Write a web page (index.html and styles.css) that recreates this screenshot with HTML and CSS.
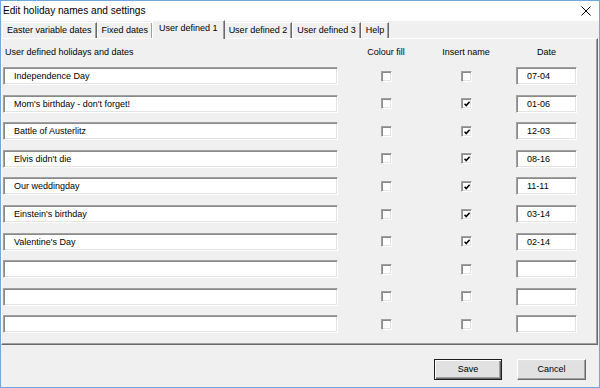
FILE: index.html
```html
<!DOCTYPE html>
<html>
<head>
<meta charset="utf-8">
<link rel="stylesheet" href="styles.css">
</head>
<body>
<div class="window">
  <div class="titlebar">
    <span class="title">Edit holiday names and settings</span>
    <svg class="close" width="10" height="10" viewBox="0 0 10 10"><path d="M0.5 0.5 L9.5 9.5 M9.5 0.5 L0.5 9.5" stroke="#000" stroke-width="1" fill="none"/></svg>
  </div>
  <div class="tabs">
    <div class="tab">Easter variable dates</div>
    <div class="tab">Fixed dates</div>
    <div class="tab active">User defined 1</div>
    <div class="tab">User defined 2</div>
    <div class="tab">User defined 3</div>
    <div class="tab">Help</div>
  </div>
  <div class="page">
    <div class="grid">
      <div class="hdr hdr-name">User defined holidays and dates</div>
      <div class="hdr">Colour fill</div>
      <div class="hdr">Insert name</div>
      <div class="hdr hdr-date">Date</div>

      <div class="field name">Independence Day</div>
      <div class="cell"><span class="cb"></span></div>
      <div class="cell"><span class="cb"></span></div>
      <div class="field date">07-04</div>

      <div class="field name">Mom's birthday - don't forget!</div>
      <div class="cell"><span class="cb"></span></div>
      <div class="cell"><span class="cb checked"><svg viewBox="0 0 6 6" width="6" height="6"><path d="M0.5 2.8 L2.2 4.6 L5.6 0.8" stroke="#000" stroke-width="1.5" fill="none"/></svg></span></div>
      <div class="field date">01-06</div>

      <div class="field name">Battle of Austerlitz</div>
      <div class="cell"><span class="cb"></span></div>
      <div class="cell"><span class="cb checked"><svg viewBox="0 0 6 6" width="6" height="6"><path d="M0.5 2.8 L2.2 4.6 L5.6 0.8" stroke="#000" stroke-width="1.5" fill="none"/></svg></span></div>
      <div class="field date">12-03</div>

      <div class="field name">Elvis didn't die</div>
      <div class="cell"><span class="cb"></span></div>
      <div class="cell"><span class="cb checked"><svg viewBox="0 0 6 6" width="6" height="6"><path d="M0.5 2.8 L2.2 4.6 L5.6 0.8" stroke="#000" stroke-width="1.5" fill="none"/></svg></span></div>
      <div class="field date">08-16</div>

      <div class="field name">Our weddingday</div>
      <div class="cell"><span class="cb"></span></div>
      <div class="cell"><span class="cb checked"><svg viewBox="0 0 6 6" width="6" height="6"><path d="M0.5 2.8 L2.2 4.6 L5.6 0.8" stroke="#000" stroke-width="1.5" fill="none"/></svg></span></div>
      <div class="field date">11-11</div>

      <div class="field name">Einstein's birthday</div>
      <div class="cell"><span class="cb"></span></div>
      <div class="cell"><span class="cb checked"><svg viewBox="0 0 6 6" width="6" height="6"><path d="M0.5 2.8 L2.2 4.6 L5.6 0.8" stroke="#000" stroke-width="1.5" fill="none"/></svg></span></div>
      <div class="field date">03-14</div>

      <div class="field name">Valentine's Day</div>
      <div class="cell"><span class="cb"></span></div>
      <div class="cell"><span class="cb checked"><svg viewBox="0 0 6 6" width="6" height="6"><path d="M0.5 2.8 L2.2 4.6 L5.6 0.8" stroke="#000" stroke-width="1.5" fill="none"/></svg></span></div>
      <div class="field date">02-14</div>

      <div class="field name"></div>
      <div class="cell"><span class="cb"></span></div>
      <div class="cell"><span class="cb"></span></div>
      <div class="field date"></div>

      <div class="field name"></div>
      <div class="cell"><span class="cb"></span></div>
      <div class="cell"><span class="cb"></span></div>
      <div class="field date"></div>

      <div class="field name"></div>
      <div class="cell"><span class="cb"></span></div>
      <div class="cell"><span class="cb"></span></div>
      <div class="field date"></div>
    </div>
  </div>
  <div class="footer">
    <div class="btn default">Save</div>
    <div class="btn">Cancel</div>
  </div>
</div>
</body>
</html>
```
FILE: styles.css
```css
* { box-sizing: border-box; }
html, body { margin: 0; padding: 0; }
body {
  width: 600px;
  height: 388px;
  font-family: "Liberation Sans", Arial, sans-serif;
  font-size: 9px;
  color: #000;
  background: #f0f0f0;
}
.window {
  width: 600px;
  height: 388px;
  border: 1px solid #6fa7de;
  background: #f0f0f0;
  display: flex;
  flex-direction: column;
}
.titlebar {
  height: 20px;
  background: #fff;
  display: flex;
  align-items: center;
  justify-content: space-between;
  padding: 0 8px 1px 2px;
  flex: none;
}
.title {
  font-size: 10.1px;
  color: #000;
}
.close { display: block; }
.tabs {
  height: 17px;
  display: flex;
  align-items: flex-end;
  padding-left: 1px;
  flex: none;
  position: relative;
  z-index: 2;
}
.tab {
  height: 16px;
  padding: 0 4px;
  line-height: 15px;
  border-top: 1px solid #fff;
  border-left: 1px solid #fff;
  border-right: 1px solid #696969;
  box-shadow: inset -1px 0 #a0a0a0;
  white-space: nowrap;
  background: #f0f0f0;
}
.tab.active {
  height: 19px;
  margin: 0 -1px -1px -1px;
  padding: 0 6px;
  line-height: 15px;
  position: relative;
}
.page {
  flex: none;
  height: 307px;
  margin: 0 1px 0 0;
  border-top: 1px solid #fff;
  border-left: 1px solid #fff;
  border-right: 1px solid #696969;
  border-bottom: 1px solid #696969;
  box-shadow: inset -1px -1px #a0a0a0;
  padding: 6px 0 0 1px;
}
.grid {
  display: grid;
  grid-template-columns: 335px 96px 64px 79px;
  grid-template-rows: 12.5px;
  grid-auto-rows: 18px;
  row-gap: 9.6px;
}
.hdr {
  line-height: 14px;
  height: 14px;
  text-align: center;
  white-space: nowrap;
}
.hdr-name { text-align: left; padding-left: 2px; }
.hdr-date { padding-left: 18px; }
.field {
  height: 18px;
  background: #fff;
  border-top: 1px solid #a0a0a0;
  border-left: 1px solid #a0a0a0;
  border-right: 1px solid #fff;
  border-bottom: 1px solid #fff;
  box-shadow: inset 1px 1px #8a8a8a, inset -1px -1px #e3e3e3;
  line-height: 16px;
  white-space: nowrap;
  overflow: hidden;
}
.name { padding-left: 10px; }
.date { width: 61px; justify-self: end; padding-left: 10px; }
.cell {
  display: flex;
  align-items: center;
  justify-content: center;
}
.cb {
  width: 11px;
  height: 11px;
  background: #fff;
  border-top: 1px solid #a0a0a0;
  border-left: 1px solid #a0a0a0;
  border-right: 1px solid #fff;
  border-bottom: 1px solid #fff;
  box-shadow: inset 1px 1px #8a8a8a, inset -1px -1px #e3e3e3;
  display: flex;
  align-items: center;
  justify-content: center;
  padding: 1px 0 0 1px;
}
.cb svg { display: block; }
.footer {
  flex: 1;
  display: flex;
  justify-content: flex-end;
  align-items: flex-start;
  padding: 14px 13px 0 0;
  gap: 15px;
}
.btn {
  width: 69px;
  height: 21px;
  line-height: 19px;
  text-align: center;
  background: #e1e1e1;
  border-top: 1px solid #fff;
  border-left: 1px solid #fff;
  border-right: 1px solid #696969;
  border-bottom: 1px solid #696969;
  box-shadow: inset -1px -1px #a0a0a0, inset 1px 1px #e3e3e3;
}
.btn.default {
  width: 68px;
  border: 1px solid #1e1e1e;
  box-shadow: inset 1px 1px #fff, inset -1px -1px #696969, inset -2px -2px #a0a0a0;
}
```
